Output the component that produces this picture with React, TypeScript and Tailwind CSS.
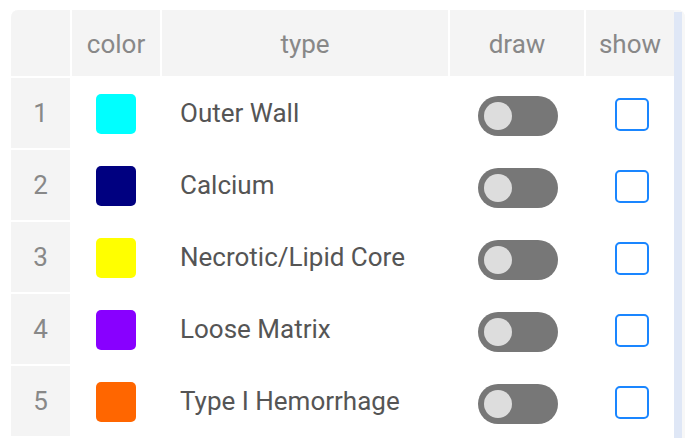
import React from "react";

const rows = [
  { n: 1, color: "#00ffff", type: "Outer Wall" },
  { n: 2, color: "#000080", type: "Calcium" },
  { n: 3, color: "#ffff00", type: "Necrotic/Lipid Core" },
  { n: 4, color: "#8800ff", type: "Loose Matrix" },
  { n: 5, color: "#ff6600", type: "Type I Hemorrhage" },
];

function Toggle() {
  return (
    <div className="w-[80px] h-[40px] rounded-full bg-[#777777] flex items-center pl-[6px] mt-[5px]">
      <div className="w-[28px] h-[28px] rounded-full bg-[#dddddd]" />
    </div>
  );
}

function Check() {
  return <div className="w-[34px] h-[33px] rounded-[5px] border-2 border-[#1a86ff] bg-white ml-[4px] mt-[2px]" />;
}

export default function App() {
  return (
    <div className="w-[696px] h-[438px] bg-white overflow-hidden pt-[10px] pl-[11px]" style={{ fontFamily: "Roboto, 'Liberation Sans', sans-serif" }}>
      <div className="flex w-[674px] rounded-t-[7px] overflow-hidden bg-[#f7f7f7]">
        <div className="grid grid-cols-[59px_88px_286px_134px_88px] grid-rows-[66px_repeat(5,70px)] gap-[2px] bg-white w-[663px] h-[430px] content-start">
          <div className="bg-[#f4f4f4]" />
          <div className="bg-[#f4f4f4] flex items-center justify-center text-[26px] text-[#888888] pt-[2px]">color</div>
          <div className="bg-[#f4f4f4] flex items-center justify-center text-[26px] text-[#888888] pt-[2px]">type</div>
          <div className="bg-[#f4f4f4] flex items-center justify-center text-[26px] text-[#888888] pt-[2px]">draw</div>
          <div className="bg-[#f4f4f4] flex items-center justify-center text-[26px] text-[#888888] pt-[2px]">show</div>
          {rows.map((r) => (
            <React.Fragment key={r.n}>
              <div className="bg-[#f4f4f4] flex items-center justify-center text-[26px] text-[#888888]">{r.n}</div>
              <div className="bg-white flex items-center justify-center">
                <div className="w-[40px] h-[40px] rounded-[5px] mt-[2px]" style={{ backgroundColor: r.color }} />
              </div>
              <div className="bg-white flex items-center pl-[18px] text-[26px] text-[#555555]">{r.type}</div>
              <div className="bg-white flex items-center justify-center pl-[2px]">
                <Toggle />
              </div>
              <div className="bg-white flex items-center justify-center">
                <Check />
              </div>
            </React.Fragment>
          ))}
        </div>
        <div className="w-[11px] pt-[2px] bg-[#f7f7f7]">
          <div className="w-[8px] h-[430px] bg-[#dfe7f6]" />
        </div>
      </div>
    </div>
  );
}
